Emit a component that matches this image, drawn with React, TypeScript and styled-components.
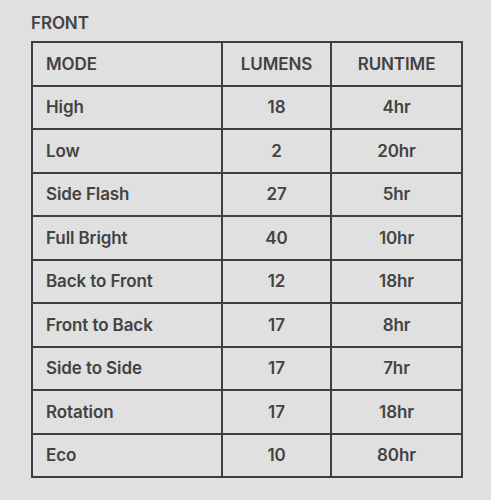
import styled, { createGlobalStyle } from 'styled-components';

const GlobalStyle = createGlobalStyle`
  html, body {
    margin: 0;
    padding: 0;
    background: #e0e0e0;
  }
  body {
    font-family: Inter, 'Liberation Sans', sans-serif;
    color: #434343;
  }
`;

type Mode = { name: string; lumens: number; runtime: string };

const modes: Mode[] = [
  { name: 'High', lumens: 18, runtime: '4hr' },
  { name: 'Low', lumens: 2, runtime: '20hr' },
  { name: 'Side Flash', lumens: 27, runtime: '5hr' },
  { name: 'Full Bright', lumens: 40, runtime: '10hr' },
  { name: 'Back to Front', lumens: 12, runtime: '18hr' },
  { name: 'Front to Back', lumens: 17, runtime: '8hr' },
  { name: 'Side to Side', lumens: 17, runtime: '7hr' },
  { name: 'Rotation', lumens: 17, runtime: '18hr' },
  { name: 'Eco', lumens: 10, runtime: '80hr' },
];

export default function App() {
  return (
    <>
      <GlobalStyle />
      <Page>
        <Title>FRONT</Title>
        <Table>
          <colgroup>
            <col style={{ width: 190 }} />
            <col style={{ width: 109 }} />
            <col style={{ width: 131 }} />
          </colgroup>
          <thead>
            <Row>
              <Cell>MODE</Cell>
              <Cell $center>LUMENS</Cell>
              <Cell $center>RUNTIME</Cell>
            </Row>
          </thead>
          <tbody>
            {modes.map((m) => (
              <Row key={m.name}>
                <Cell>{m.name}</Cell>
                <Cell $center>{m.lumens}</Cell>
                <Cell $center>{m.runtime}</Cell>
              </Row>
            ))}
          </tbody>
        </Table>
      </Page>
    </>
  );
}

const Page = styled.div`
  padding: 12px 0 0 31px;
`;

const Title = styled.div`
  font-size: 17px;
  font-weight: 600;
  line-height: 22px;
  letter-spacing: -0.1px;
  margin-bottom: 7px;
`;

const Table = styled.table`
  border-collapse: collapse;
  table-layout: fixed;
  width: 431px;
  border: 2px solid #3f3f3f;
`;

const Row = styled.tr`
  height: 43.5px;
`;

const Cell = styled.td<{ $center?: boolean }>`
  border: 2px solid #3f3f3f;
  padding: 0 0 0 ${(p) => (p.$center ? '0' : '13px')};
  text-align: ${(p) => (p.$center ? 'center' : 'left')};
  font-size: 17px;
  font-weight: 600;
  letter-spacing: -0.1px;
`;
